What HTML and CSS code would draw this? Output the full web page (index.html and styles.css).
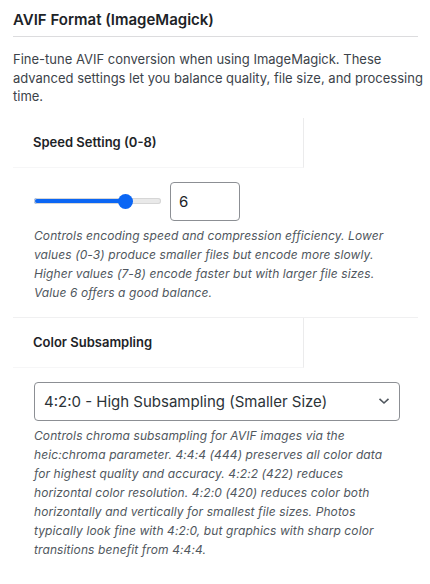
FILE: index.html
```html
<!DOCTYPE html>
<html lang="en">
<head>
    <meta charset="utf-8">
    <title>AVIF Format (ImageMagick)</title>
    <link rel="stylesheet" href="styles.css">
</head>
<body>
    <div class="settings-section">
        <h3 class="section-title">AVIF Format (ImageMagick)</h3>
        <p class="section-intro">Fine-tune AVIF conversion when using ImageMagick. These advanced settings let you balance quality, file size, and processing time.</p>

        <div class="form-table">
            <div class="form-row">
                <div class="row-label"><label for="avifSpeed">Speed Setting (0-8)</label></div>
                <div class="row-field">
                    <div class="range-group">
                        <input type="range" class="range-input" id="avifSpeed" min="0" max="8" value="6" style="--fill: 75%">
                        <input type="number" class="number-input" id="avifSpeedValue" min="0" max="8" value="6">
                    </div>
                    <p class="description">Controls encoding speed and compression efficiency. Lower values (0-3) produce smaller files but encode more slowly. Higher values (7-8) encode faster but with larger file sizes. Value 6 offers a good balance.</p>
                </div>
            </div>
            <div class="form-row">
                <div class="row-label"><label for="avifChroma">Color Subsampling</label></div>
                <div class="row-field">
                    <select id="avifChroma" class="select-input">
                        <option value="444">4:4:4 - No Subsampling (Best Quality)</option>
                        <option value="422">4:2:2 - Medium Subsampling</option>
                        <option value="420" selected>4:2:0 - High Subsampling (Smaller Size)</option>
                    </select>
                    <p class="description">Controls chroma subsampling for AVIF images via the heic:chroma parameter. 4:4:4 (444) preserves all color data for highest quality and accuracy. 4:2:2 (422) reduces horizontal color resolution. 4:2:0 (420) reduces color both horizontally and vertically for smallest file sizes. Photos typically look fine with 4:2:0, but graphics with sharp color transitions benefit from 4:4:4.</p>
                </div>
            </div>
        </div>
    </div>
</body>
</html>
```

FILE: styles.css
```css
body {
    margin: 0;
    background-color: #fff;
    font-family: Inter, "Noto Sans", sans-serif;
    color: #1d2327;
}
.settings-section {
    padding: 11px 12px 0 13px;
}
.section-title {
    margin: 0;
    padding-bottom: 7px;
    font-size: 15px;
    font-weight: 600;
    line-height: 18px;
    border-bottom: 1px solid #dcdcde;
}
.section-intro {
    margin: 13px -12px 12px 0;
    font-size: 13px;
    line-height: 18.5px;
    color: #3c434a;
}
.form-row {
    border-bottom: 1px solid #f0f0f1;
}
.form-row:last-child {
    border-bottom: none;
}
.row-label {
    width: 270px;
    padding: 0 0 0 20px;
    height: 49px;
    display: flex;
    align-items: center;
    border-right: 1px solid #ebebec;
    border-bottom: 1px solid #f6f6f7;
}
.row-label label {
    font-size: 13px;
    font-weight: 600;
    color: #1d2327;
}
.row-field {
    padding: 14px 0 15px 21px;
}
.range-group {
    display: flex;
    align-items: center;
    gap: 9px;
}
.range-input {
    -webkit-appearance: none;
    appearance: none;
    width: 127px;
    height: 14px;
    margin: 0;
    background: transparent;
}
.range-input::-webkit-slider-runnable-track {
    height: 6px;
    border-radius: 3px;
    background: linear-gradient(to right, #0b66f4 var(--fill), #e9e9e9 var(--fill));
    box-shadow: inset 0 0 0 1px #d6d6d6;
}
.range-input::-webkit-slider-thumb {
    -webkit-appearance: none;
    width: 15px;
    height: 15px;
    margin-top: -4.5px;
    border-radius: 50%;
    background: #0b66f4;
    border: none;
}
.number-input {
    box-sizing: border-box;
    width: 70px;
    height: 39px;
    margin: 0;
    padding: 0 8px;
    border: 1px solid #8c8f94;
    border-radius: 4px;
    font-family: inherit;
    font-size: 15px;
    color: #1d2327;
    -moz-appearance: textfield;
}
.number-input::-webkit-inner-spin-button,
.number-input::-webkit-outer-spin-button {
    -webkit-appearance: none;
    margin: 0;
}
.select-input {
    -webkit-appearance: none;
    appearance: none;
    box-sizing: border-box;
    width: 366px;
    height: 39px;
    margin: 0;
    padding: 0 30px 0 9px;
    border: 1px solid #8c8f94;
    border-radius: 4px;
    font-family: inherit;
    font-size: 15px;
    color: #2c3338;
    background: #fff url("data:image/svg+xml,%3Csvg xmlns='http://www.w3.org/2000/svg' width='12' height='8' viewBox='0 0 12 8'%3E%3Cpath d='M1.5 1.8 6 6l4.5-4.2' fill='none' stroke='%2350575e' stroke-width='1.6'/%3E%3C/svg%3E") no-repeat right 9px center;
}
.description {
    margin: 5px 0 0;
    font-size: 12px;
    font-style: italic;
    line-height: 19px;
    letter-spacing: 0.1px;
    color: #50575e;
    width: 366px;
}
```
